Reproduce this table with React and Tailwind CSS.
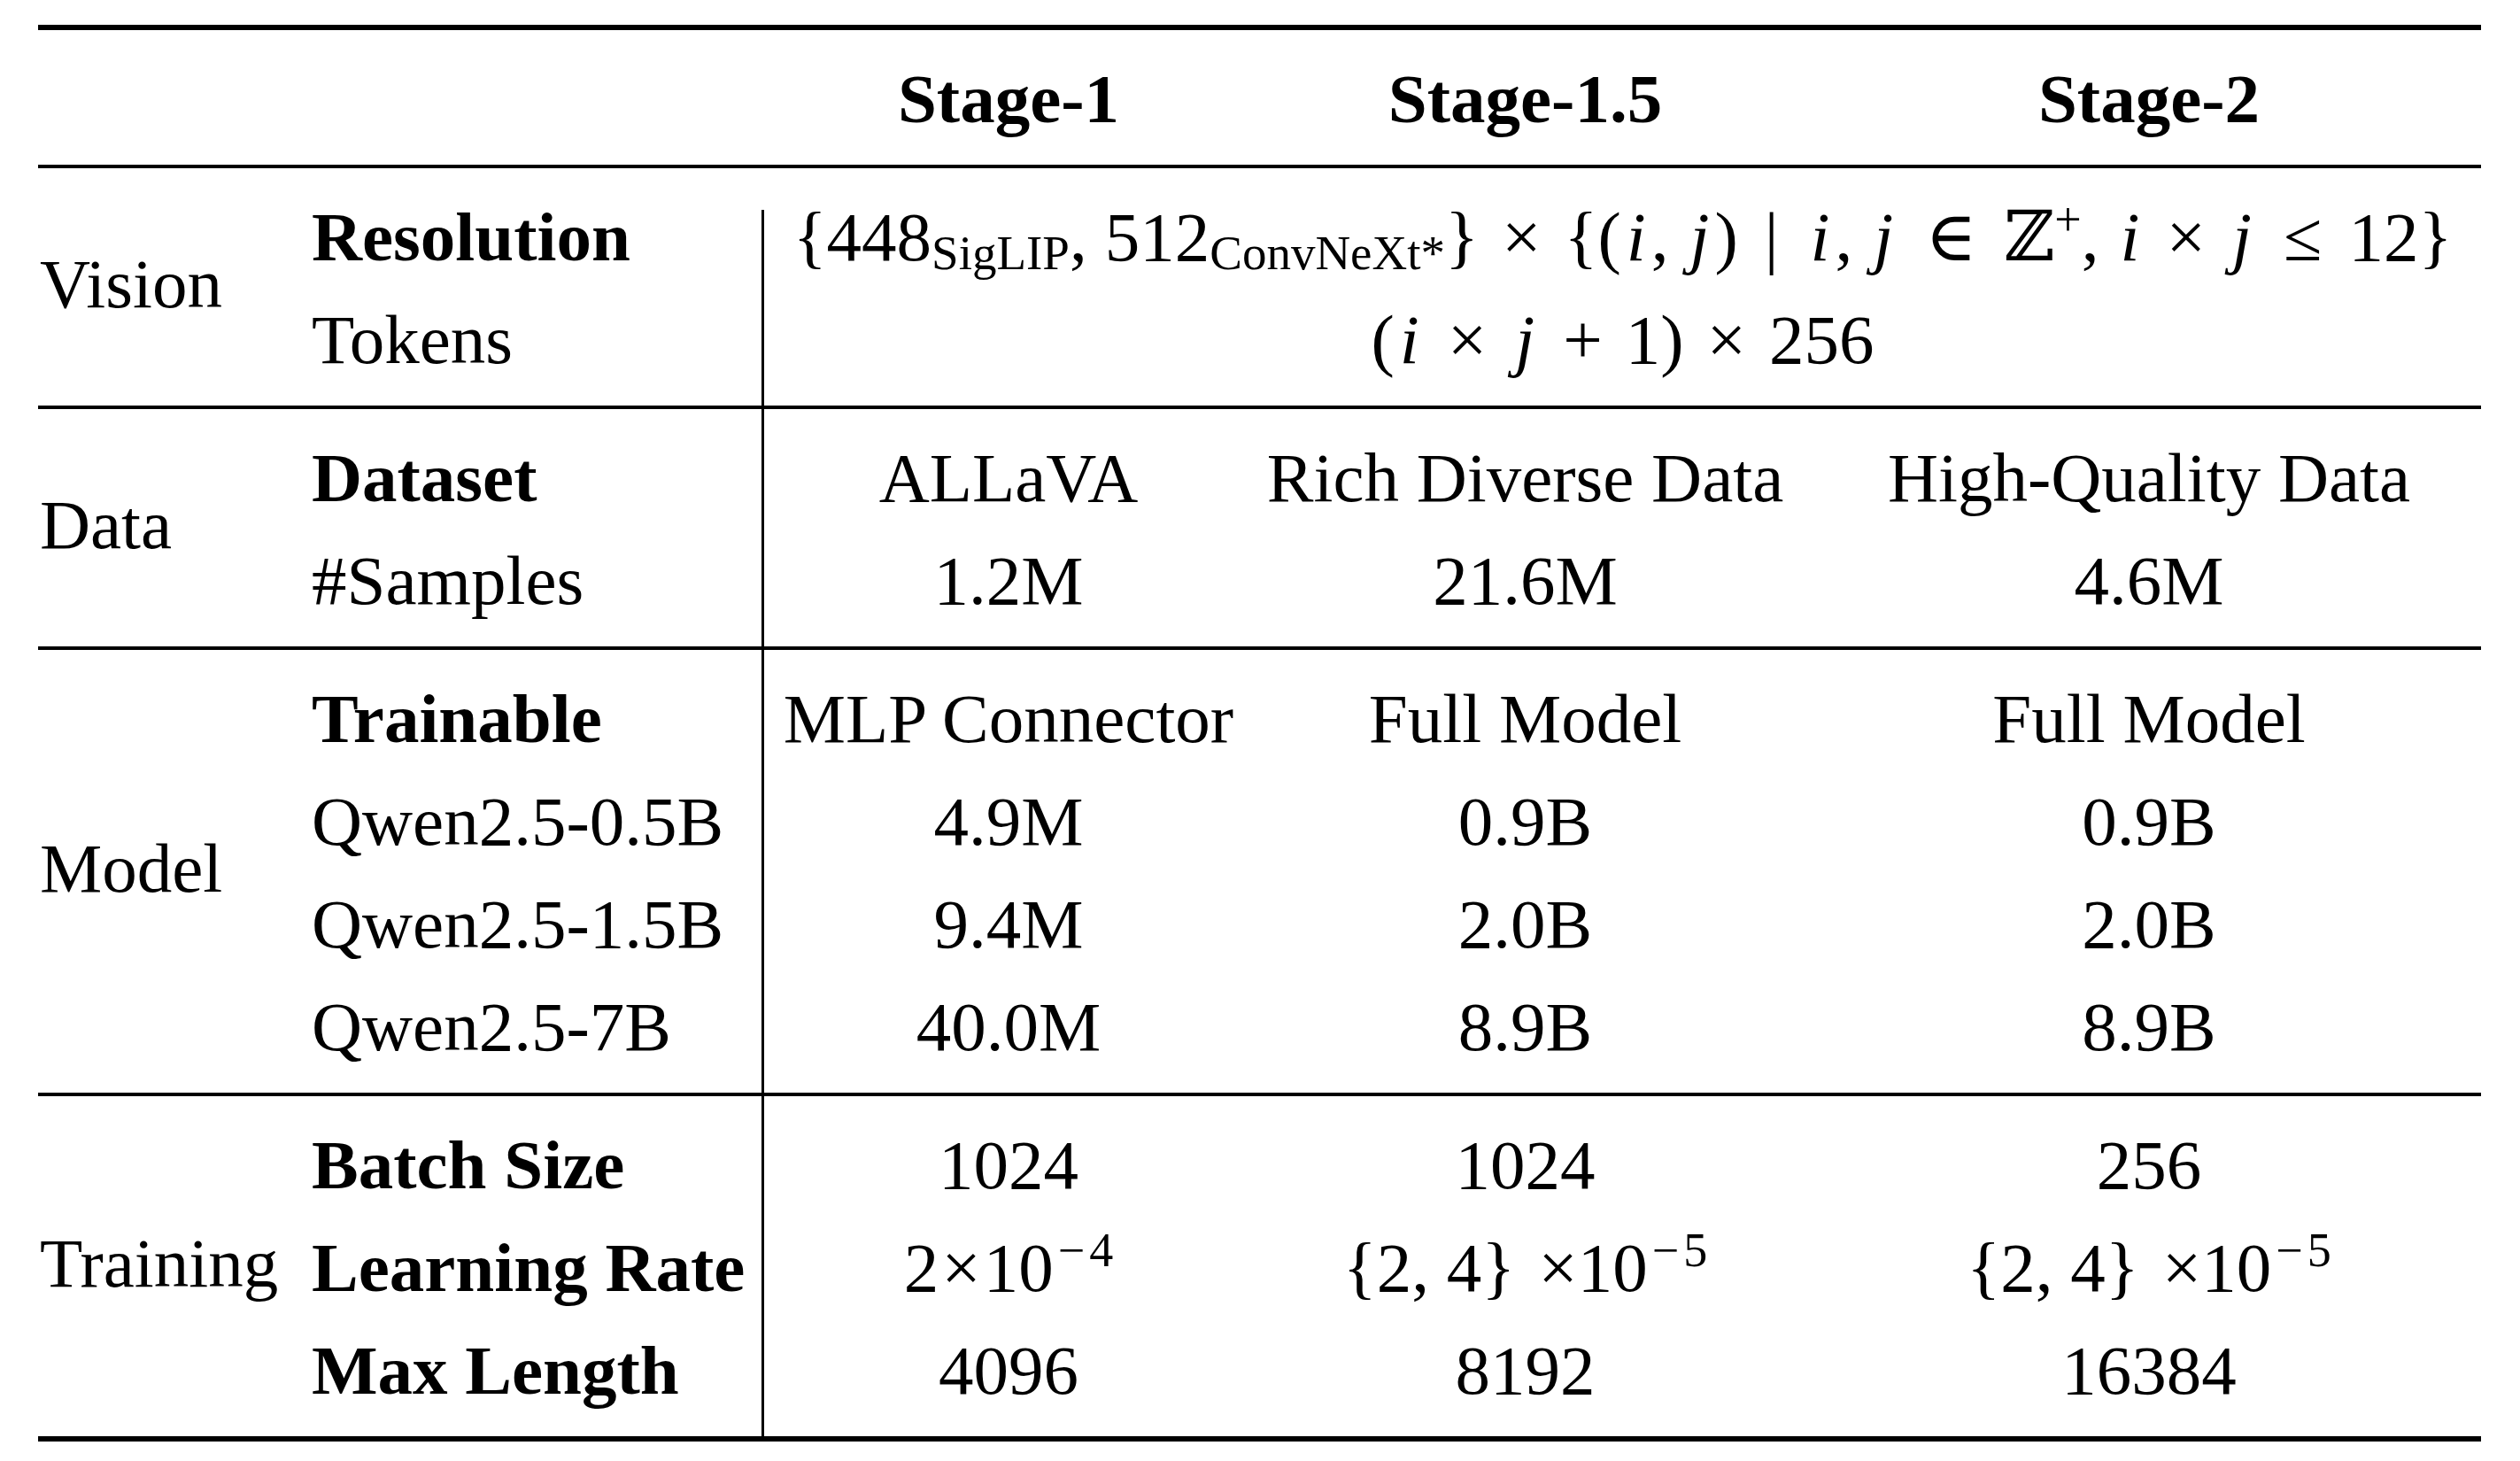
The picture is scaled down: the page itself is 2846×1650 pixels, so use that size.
import React from "react";

const Sub = ({ children }) => (
  <span className="relative top-[10px] text-[55px] leading-none">{children}</span>
);
const Sup = ({ children, cls = "" }) => (
  <span className={"relative -top-[28px] text-[54px] leading-none " + cls}>{children}</span>
);
const I = ({ children, cls = "" }) => <i className={"italic px-[6px] " + cls}>{children}</i>;
const Minus = () => <span className="px-[5px]">−</span>;

function Row({ a, b, c }) {
  return (
    <div className="grid grid-cols-[552px_615px_772px] text-center">
      <div>{a}</div>
      <div>{b}</div>
      <div className="pl-[22px]">{c}</div>
    </div>
  );
}

function Section({ label, labels, children, vision, last }) {
  return (
    <div className={last ? "flex border-b-[6px] border-black" : "flex border-b-[4px] border-black"}>
      <div className="w-[309px] flex items-center pl-[2px] pb-[6px]">{label}</div>
      <div className="w-[508px] pt-[20px] pb-[16px] flex flex-col">{labels}</div>
      <div
        className={
          vision
            ? "w-[1942px] border-l-[3px] border-black mt-[47px] pb-[16px]"
            : "w-[1942px] border-l-[3px] border-black pt-[20px] pb-[16px]"
        }
      >
        <div className={vision ? "-mt-[27px]" : ""}>{children}</div>
      </div>
    </div>
  );
}

const LR1 = (
  <span>
    2<span className="mx-[3px]">×</span>10
    <Sup>
      <Minus />4
    </Sup>
  </span>
);
const LR2 = (
  <span>
    {"{2, 4}"}
    <span className="ml-[26px]">×10</span>
    <Sup>
      <Minus />5
    </Sup>
  </span>
);

export default function App() {
  return (
    <div className="w-[2846px] h-[1650px] bg-white text-black overflow-hidden font-['Liberation_Serif','DejaVu_Serif',serif]">
      <div className="pt-[28px] pl-[43px]">
        <div className="w-[2759px] text-[79px] leading-[116px]">
          {/* Header */}
          <div className="flex border-t-[6px] border-b-[4px] border-black">
            <div className="w-[817px]" />
            <div className="w-[1942px] border-l-[3px] border-transparent pt-[20px] pb-[16px] font-bold">
              <Row a="Stage-1" b="Stage-1.5" c="Stage-2" />
            </div>
          </div>

          {/* Vision */}
          <Section
            vision
            label="Vision"
            labels={
              <>
                <div className="font-bold">Resolution</div>
                <div>Tokens</div>
              </>
            }
          >
            <div className="text-center whitespace-nowrap">
              <span>{"{448"}</span>
              <Sub>SigLIP</Sub>
              <span>,</span>
              <span className="ml-[20px]">512</span>
              <Sub>ConvNeXt*</Sub>
              <span>{"}"}</span>
              <span className="mx-[26px]">×</span>
              <span>{"{("}</span>
              <I>i</I>
              <span>,</span>
              <I cls="ml-[18px]">j</I>
              <span>)</span>
              <span className="mx-[30px]">|</span>
              <I>i</I>
              <span>,</span>
              <I cls="ml-[18px]">j</I>
              <span className="mx-[30px] leading-none">∈</span>
              <span className="leading-none">ℤ</span>
              <Sup>+</Sup>
              <span>,</span>
              <I cls="ml-[18px]">i</I>
              <span className="mx-[24px]">×</span>
              <I>j</I>
              <span className="mx-[30px]">≤</span>
              <span>{"12}"}</span>
            </div>
            <div className="text-center whitespace-nowrap">
              <span>(</span>
              <I>i</I>
              <span className="mx-[26px]">×</span>
              <I>j</I>
              <span className="mx-[26px]">+</span>
              <span>1)</span>
              <span className="mx-[26px]">×</span>
              <span>256</span>
            </div>
          </Section>

          {/* Data */}
          <Section
            label="Data"
            labels={
              <>
                <div className="font-bold">Dataset</div>
                <div>#Samples</div>
              </>
            }
          >
            <Row a="ALLaVA" b="Rich Diverse Data" c="High-Quality Data" />
            <Row a="1.2M" b="21.6M" c="4.6M" />
          </Section>

          {/* Model */}
          <Section
            label="Model"
            labels={
              <>
                <div className="font-bold">Trainable</div>
                <div>Qwen2.5-0.5B</div>
                <div>Qwen2.5-1.5B</div>
                <div>Qwen2.5-7B</div>
              </>
            }
          >
            <Row a="MLP Connector" b="Full Model" c="Full Model" />
            <Row a="4.9M" b="0.9B" c="0.9B" />
            <Row a="9.4M" b="2.0B" c="2.0B" />
            <Row a="40.0M" b="8.9B" c="8.9B" />
          </Section>

          {/* Training */}
          <Section
            last
            label="Training"
            labels={
              <>
                <div className="font-bold">Batch Size</div>
                <div className="font-bold">Learning Rate</div>
                <div className="font-bold">Max Length</div>
              </>
            }
          >
            <Row a="1024" b="1024" c="256" />
            <Row a={LR1} b={LR2} c={LR2} />
            <Row a="4096" b="8192" c="16384" />
          </Section>
        </div>
      </div>
    </div>
  );
}
